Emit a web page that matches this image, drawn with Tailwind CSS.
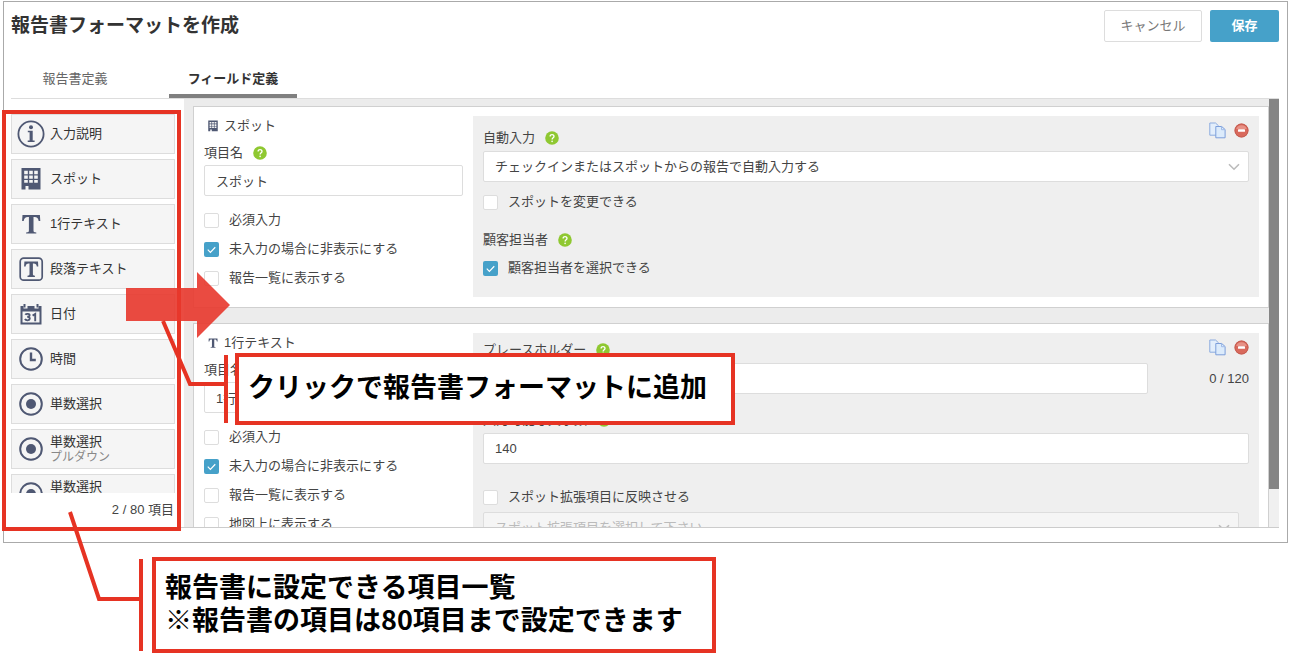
<!DOCTYPE html>
<html lang="ja">
<head>
<meta charset="utf-8">
<title>報告書フォーマットを作成</title>
<script src="https://cdn.jsdelivr.net/npm/@tailwindcss/browser@4"></script>
</head>
<body class="relative flow-root min-h-screen bg-white font-['Liberation_Sans','Noto_Sans_CJK_JP',sans-serif] text-[13px] leading-5 text-[#444]">

<!-- Icon sprite -->
<svg class="hidden" aria-hidden="true">
  <symbol id="info" viewBox="0 0 28 28"><circle cx="14" cy="14" r="12.6" fill="none" stroke="#4f5873" stroke-width="1.8"/><circle cx="14" cy="7.200" r="2" fill="#4f5873"/><path d="M10.800 10.800h4.900v9.600h1.900v1.500h-6.900v-1.500h1.900v-8.100h-1.800z" fill="#4f5873"/></symbol>
  <symbol id="building" viewBox="0 0 28 28"><path d="M4.500 3h19v21.500H11.500v-3.500H8.500v3.500H4.500z" fill="#4f5873"/><path d="M7.200 5.800h3.600v3.400H7.200zM12.200 5.800h3.600v3.400h-3.600zM17.200 5.800h3.600v3.400h-3.600zM7.200 10.400h3.600v3.400H7.200zM12.200 10.400h3.600v3.400h-3.600zM17.200 10.400h3.600v3.400h-3.600zM7.200 15h3.600v2.800H7.200zM12.200 15h3.600v2.800h-3.600zM17.200 15h3.600v2.800h-3.600z" fill="#f5f5f5"/></symbol>
  <symbol id="tee" viewBox="0 0 28 28"><path d="M5.500 5h17.400l.4 6h-1.600c-.5-2.900-1.500-4-4.300-4h-.9v13.400c0 1.500.6 1.900 2.800 2V23.500H9.100v-1.100c2.200-.1 2.800-.5 2.800-2V7h-.9c-2.800 0-3.800 1.100-4.300 4H5.100z" fill="#4f5873"/></symbol>
  <symbol id="teebox" viewBox="0 0 28 28"><rect x="3.200" y="3.200" width="22" height="22" rx="3.500" fill="none" stroke="#4f5873" stroke-width="1.700"/><path d="M7.400 6.500h13.600l.3 5h-1.500c-.4-2.200-1.100-3-3.200-3h-.7v10.600c0 1.300.5 1.600 2 1.700v1.200h-7.400v-1.200c1.500-.1 2-.4 2-1.700V8.500h-.7c-2.100 0-2.800.8-3.200 3H7.100z" fill="#4f5873"/></symbol>
  <symbol id="calendar" viewBox="0 0 28 28"><path d="M3.500 6h3v2.500h4V6h7v2.500h4V6h3v18.500h-21z" fill="#4f5873"/><path d="M7.500 4v3.500M20.500 4v3.500" stroke="#4f5873" stroke-width="2"/><path d="M5.500 11.500h17v11h-17z" fill="#f5f5f5"/><path d="M8.300 14.800c1-1.400 4.600-1.200 4.300.6-.2 1.300-1.800 1.400-2.400 1.400.8 0 2.700.2 2.600 1.900-.2 2.100-3.800 2.200-4.900.4M15.600 15.600l2.600-1.600v7.300" fill="none" stroke="#4f5873" stroke-width="1.900"/></symbol>
  <symbol id="clock" viewBox="0 0 28 28"><circle cx="14" cy="14" r="10.800" fill="none" stroke="#4f5873" stroke-width="2"/><path d="M14 7.500V15h4.800" fill="none" stroke="#4f5873" stroke-width="2.400"/></symbol>
  <symbol id="radio" viewBox="0 0 28 28"><circle cx="14" cy="14" r="10.800" fill="none" stroke="#4f5873" stroke-width="2"/><circle cx="14" cy="14" r="5" fill="#4f5873"/></symbol>
  <symbol id="help" viewBox="0 0 14 14"><circle cx="7" cy="7" r="6.800" fill="#8fc831"/><path d="M5.100 5.500c0-2.500 3.900-2.400 3.900-.1C9 6.800 7.100 6.700 7.100 8.500" fill="none" stroke="#fff" stroke-width="1.300"/><circle cx="7.100" cy="10.400" r=".8" fill="#fff"/></symbol>
  <symbol id="copy" viewBox="0 0 17 17"><path d="M.8 1h5.700l3 2.800v9.400H.8z" fill="#e3eefb" stroke="#8cabdf"/><path d="M6.800 4.500h5.900l3.400 3v8.300H6.800z" fill="#dcebfb" stroke="#7c9edb"/><path d="M12.500 4.700v3h3.300" fill="none" stroke="#9fbbe8"/></symbol>
  <symbol id="minus" viewBox="0 0 15 15"><circle cx="7.500" cy="7.500" r="7" fill="#d9695c"/><circle cx="7.500" cy="7.500" r="6.500" fill="none" stroke="#bf5a4f" stroke-width=".8"/><path d="M2.200 6a5.500 5 0 0 1 10.600 0z" fill="#e79186"/><rect x="4" y="6.200" width="7" height="2.600" rx=".6" fill="#fff"/></symbol>
  <symbol id="tick" viewBox="0 0 16 16"><path d="M4 8.200l2.800 2.800L12 5.600" fill="none" stroke="#fff" stroke-width="1.300"/></symbol>
  <symbol id="chevron" viewBox="0 0 12 8"><path d="M1 1.200l5 5 5-5" fill="none" stroke="#bbb" stroke-width="1.600"/></symbol>
</svg>

<div class="mt-px mr-2 ml-[3px] border border-[#aaa] pr-2 pb-3.5 pl-[7px]">
  <header class="flex items-center justify-between pt-2">
    <h1 class="text-[19px] leading-8 font-bold text-[#333]">報告書フォーマットを作成</h1>
    <div class="flex gap-2">
      <button class="h-8 w-[98px] rounded-[2px] border border-[#ddd] bg-white text-[#777]">キャンセル</button>
      <button class="h-8 w-[69px] rounded-[2px] bg-[#46a1c9] font-bold text-white">保存</button>
    </div>
  </header>

  <nav class="flex gap-[30px] border-b border-[#ddd] pt-[27px]">
    <a href="#" class="w-32 border-b-4 border-transparent pb-[5px] text-center text-[#666]">報告書定義</a>
    <a href="#" class="w-32 border-b-4 border-[#808080] pb-[5px] text-center font-bold text-[#333]">フィールド定義</a>
  </nav>

  <div class="flex h-[429px] border-b border-[#ccc]">
    <!-- Field palette -->
    <aside class="flex w-[173px] shrink-0 flex-col">
      <div class="flex min-h-0 flex-1 flex-col gap-[5px] overflow-hidden pt-[15px] pr-[9px] text-[#333]">
        <button class="flex h-10 shrink-0 items-center gap-[5px] border border-[#ddd] bg-[#f5f5f5] pl-[5px] text-left"><svg class="size-7"><use href="#info"/></svg>入力説明</button>
        <button class="flex h-10 shrink-0 items-center gap-[5px] border border-[#ddd] bg-[#f5f5f5] pl-[5px] text-left"><svg class="size-7"><use href="#building"/></svg>スポット</button>
        <button class="flex h-10 shrink-0 items-center gap-[5px] border border-[#ddd] bg-[#f5f5f5] pl-[5px] text-left"><svg class="size-7"><use href="#tee"/></svg>1行テキスト</button>
        <button class="flex h-10 shrink-0 items-center gap-[5px] border border-[#ddd] bg-[#f5f5f5] pl-[5px] text-left"><svg class="size-7"><use href="#teebox"/></svg>段落テキスト</button>
        <button class="flex h-10 shrink-0 items-center gap-[5px] border border-[#ddd] bg-[#f5f5f5] pl-[5px] text-left"><svg class="size-7"><use href="#calendar"/></svg>日付</button>
        <button class="flex h-10 shrink-0 items-center gap-[5px] border border-[#ddd] bg-[#f5f5f5] pl-[5px] text-left"><svg class="size-7"><use href="#clock"/></svg>時間</button>
        <button class="flex h-10 shrink-0 items-center gap-[5px] border border-[#ddd] bg-[#f5f5f5] pl-[5px] text-left"><svg class="size-7"><use href="#radio"/></svg>単数選択</button>
        <button class="flex h-10 shrink-0 items-center gap-[5px] border border-[#ddd] bg-[#f5f5f5] pl-[5px] text-left"><svg class="size-7"><use href="#radio"/></svg><span class="leading-[15px]">単数選択<br><span class="text-xs leading-[15px] text-[#888]">プルダウン</span></span></button>
        <button class="flex h-10 shrink-0 items-center gap-[5px] border border-[#ddd] bg-[#f5f5f5] pl-[5px] text-left"><svg class="size-7"><use href="#radio"/></svg><span class="pb-[15px] leading-[15px]">単数選択</span></button>
      </div>
      <p class="h-[34px] pt-[7px] pr-[10px] text-right">2 / 80 項目</p>
    </aside>

    <!-- Form canvas -->
    <main class="flex min-w-0 flex-1 flex-col gap-[15px] overflow-hidden bg-[#ececec] pt-[7px] pl-[9px]">
      <section class="flex shrink-0 gap-[10px] border border-[#d0d0d0] bg-white pt-[9px] pr-[9px] pb-[10px] pl-[10px]">
        <div class="w-[259px] shrink-0">
          <h2 class="flex items-center gap-1 pl-[2px]"><svg class="size-3.5"><use href="#building"/></svg>スポット</h2>
          <label for="name1" class="mt-[7px] flex items-center gap-[10px]">項目名<svg class="size-3.5"><use href="#help"/></svg></label>
          <input id="name1" value="スポット" class="mt-[2px] h-[31px] w-full rounded-[2px] border border-[#ddd] bg-white px-[11px]">
          <div class="mt-3.5 flex flex-col gap-[9px]">
            <label class="flex items-center gap-2.5"><span class="grid"><input type="checkbox" class="col-start-1 row-start-1 size-[15px] appearance-none rounded-[2px] border border-[#ddd] bg-white"></span>必須入力</label>
            <label class="flex items-center gap-2.5"><span class="grid"><input type="checkbox" checked class="col-start-1 row-start-1 size-[15px] appearance-none rounded-[2px] bg-[#46a1c9]"><svg class="col-start-1 row-start-1 size-[15px]"><use href="#tick"/></svg></span>未入力の場合に非表示にする</label>
            <label class="flex items-center gap-2.5"><span class="grid"><input type="checkbox" class="col-start-1 row-start-1 size-[15px] appearance-none rounded-[2px] border border-[#ddd] bg-white"></span>報告一覧に表示する</label>
          </div>
        </div>
        <div class="min-w-0 flex-1 bg-[#efefef] px-[10px] pt-[6px] pb-[19px]">
          <div class="flex items-start justify-between">
            <label for="auto" class="flex items-center gap-[10px] pt-[6px]">自動入力<svg class="size-3.5"><use href="#help"/></svg></label>
            <div class="flex items-center gap-2">
              <button aria-label="複製"><svg class="size-[17px]"><use href="#copy"/></svg></button>
              <button aria-label="削除"><svg class="size-[15px]"><use href="#minus"/></svg></button>
            </div>
          </div>
          <div class="mt-[3px] grid items-center">
            <select id="auto" class="col-start-1 row-start-1 h-[31px] w-full appearance-none rounded-[2px] border border-[#ddd] bg-white px-[11px]"><option>チェックインまたはスポットからの報告で自動入力する</option></select>
            <svg class="pointer-events-none col-start-1 row-start-1 mr-[9px] h-2 w-3 justify-self-end"><use href="#chevron"/></svg>
          </div>
          <label class="mt-[10px] flex items-center gap-2.5"><span class="grid"><input type="checkbox" class="col-start-1 row-start-1 size-[15px] appearance-none rounded-[2px] border border-[#ddd] bg-white"></span>スポットを変更できる</label>
          <p class="mt-[18px] flex items-center gap-[10px]">顧客担当者<svg class="size-3.5"><use href="#help"/></svg></p>
          <label class="mt-2 flex items-center gap-2.5"><span class="grid"><input type="checkbox" checked class="col-start-1 row-start-1 size-[15px] appearance-none rounded-[2px] bg-[#46a1c9]"><svg class="col-start-1 row-start-1 size-[15px]"><use href="#tick"/></svg></span>顧客担当者を選択できる</label>
        </div>
      </section>

      <section class="flex shrink-0 gap-[10px] border border-[#d0d0d0] bg-white pt-[9px] pr-[9px] pb-[10px] pl-[10px]">
        <div class="w-[259px] shrink-0">
          <h2 class="flex items-center gap-1 pl-[2px]"><svg class="size-3.5"><use href="#tee"/></svg>1行テキスト</h2>
          <label for="name2" class="mt-[7px] flex items-center gap-[10px]">項目名<svg class="size-3.5"><use href="#help"/></svg></label>
          <input id="name2" value="1行テキスト" class="mt-[2px] h-[31px] w-full rounded-[2px] border border-[#ddd] bg-white px-[11px]">
          <div class="mt-3.5 flex flex-col gap-[9px]">
            <label class="flex items-center gap-2.5"><span class="grid"><input type="checkbox" class="col-start-1 row-start-1 size-[15px] appearance-none rounded-[2px] border border-[#ddd] bg-white"></span>必須入力</label>
            <label class="flex items-center gap-2.5"><span class="grid"><input type="checkbox" checked class="col-start-1 row-start-1 size-[15px] appearance-none rounded-[2px] bg-[#46a1c9]"><svg class="col-start-1 row-start-1 size-[15px]"><use href="#tick"/></svg></span>未入力の場合に非表示にする</label>
            <label class="flex items-center gap-2.5"><span class="grid"><input type="checkbox" class="col-start-1 row-start-1 size-[15px] appearance-none rounded-[2px] border border-[#ddd] bg-white"></span>報告一覧に表示する</label>
            <label class="flex items-center gap-2.5"><span class="grid"><input type="checkbox" class="col-start-1 row-start-1 size-[15px] appearance-none rounded-[2px] border border-[#ddd] bg-white"></span>地図上に表示する</label>
          </div>
        </div>
        <div class="min-w-0 flex-1 bg-[#efefef] px-[10px] pt-[6px] pb-[19px]">
          <div class="flex items-start justify-between">
            <label for="ph" class="flex items-center gap-[10px] pt-px">プレースホルダー<svg class="size-3.5"><use href="#help"/></svg></label>
            <div class="flex items-center gap-2">
              <button aria-label="複製"><svg class="size-[17px]"><use href="#copy"/></svg></button>
              <button aria-label="削除"><svg class="size-[15px]"><use href="#minus"/></svg></button>
            </div>
          </div>
          <div class="mt-[3px] flex items-center">
            <input id="ph" class="h-[31px] min-w-0 flex-1 rounded-[2px] border border-[#ddd] bg-white px-[11px]">
            <span class="w-[101px] text-right">0 / 120</span>
          </div>
          <label for="max" class="mt-4 flex items-center gap-[10px]">入力可能な文字数<svg class="size-3.5"><use href="#help"/></svg></label>
          <input id="max" value="140" class="mt-[3px] h-[31px] w-full rounded-[2px] border border-[#ddd] bg-white px-[11px]">
          <label class="mt-[23px] flex items-center gap-2.5"><span class="grid"><input type="checkbox" class="col-start-1 row-start-1 size-[15px] appearance-none rounded-[2px] border border-[#ddd] bg-white"></span>スポット拡張項目に反映させる</label>
          <div class="mt-[5px] mr-[10px] grid items-center">
            <select disabled aria-label="スポット拡張項目" class="col-start-1 row-start-1 h-[31px] w-full appearance-none rounded-[2px] border border-[#ddd] bg-[#f5f5f5] px-[11px] text-[#bbb] opacity-100"><option>スポット拡張項目を選択して下さい</option></select>
            <svg class="pointer-events-none col-start-1 row-start-1 mr-[9px] h-2 w-3 justify-self-end"><use href="#chevron"/></svg>
          </div>
        </div>
      </section>
    </main>

    <!-- Scrollbar -->
    <div class="w-[10px] shrink-0 bg-[#f0f0f0]"><div class="h-[390px] bg-[#858585]"></div></div>
  </div>
</div>

<!-- Annotations -->
<p class="mt-3.5 mb-1 ml-[152px] w-[564px] border-4 border-[#e63323] bg-white pt-2 pb-[14px] pl-[9px] font-['Noto_Sans_CJK_JP',sans-serif] text-[27px] leading-[33px] font-bold whitespace-nowrap text-black">報告書に設定できる項目一覧<br>※報告書の項目は80項目まで設定できます</p>
<div class="absolute top-[110px] left-[2px] h-[421px] w-[179px] border-4 border-[#e63323]"></div>
<svg class="pointer-events-none absolute top-0 left-0" width="300" height="658" viewBox="0 0 300 658" fill="none" stroke="#e63323" stroke-width="4">
  <path d="M126 288h71v-16l33 33-33 33v-17h-71z" fill="#e8372c" fill-opacity=".9" stroke="none"/>
  <path d="M163 321l27 63h36M226 355v68"/>
  <path d="M70 512l29 87h42M141 559v92"/>
</svg>
<p class="absolute top-[353px] left-[235px] w-[500px] border-4 border-[#e63323] bg-white pt-3 pb-[18px] pl-[9px] font-['Noto_Sans_CJK_JP',sans-serif] text-[27px] leading-[34px] font-bold whitespace-nowrap text-black">クリックで報告書フォーマットに追加</p>
</body>
</html>
